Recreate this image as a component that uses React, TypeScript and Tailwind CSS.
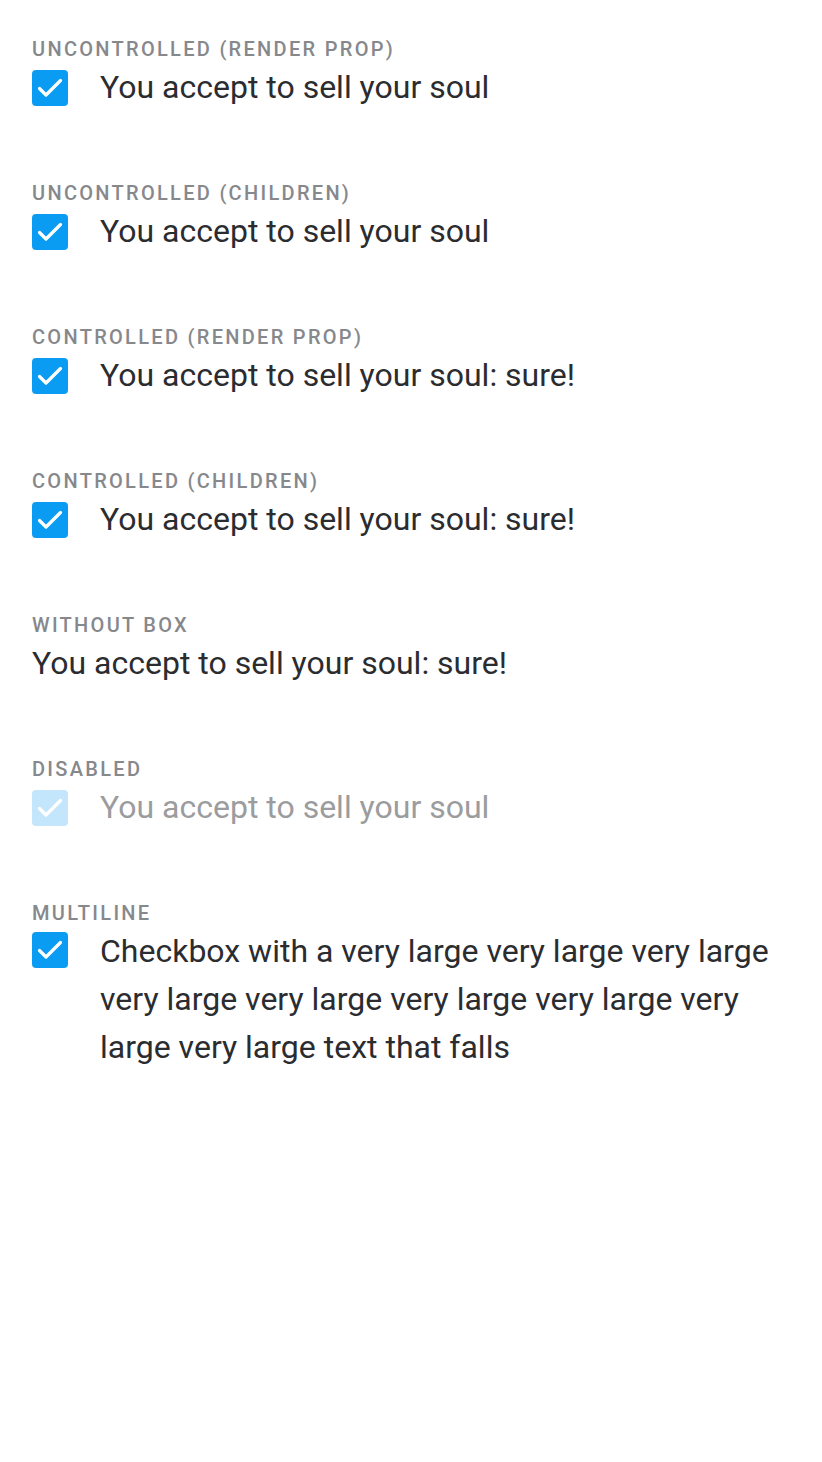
import React from 'react';

const font = { fontFamily: 'Roboto, "Noto Sans", sans-serif' };

const Box: React.FC<{ disabled?: boolean; className?: string }> = ({ disabled, className = '' }) => (
  <span
    className={`flex h-[36px] w-[36px] shrink-0 items-center justify-center rounded-[4px] ${
      disabled ? 'bg-[#c3e6fc]' : 'bg-[#0a9bf3]'
    } ${className}`}
  >
    <svg width="36" height="36" viewBox="0 0 36 36" fill="none">
      <path d="M7.5 18.5 L14 25 L28.5 10.5" stroke="white" strokeWidth="3.2" strokeLinecap="round" strokeLinejoin="round" />
    </svg>
  </span>
);

const Section: React.FC<{ title: string; children: React.ReactNode }> = ({ title, children }) => (
  <div>
    <div className="text-[20px] leading-[24px] font-medium uppercase tracking-[2.3px] text-[#86888c]">{title}</div>
    {children}
  </div>
);

const Row: React.FC<{ text: string; disabled?: boolean; noBox?: boolean }> = ({ text, disabled, noBox }) => (
  <label className="mt-[2px] flex items-center gap-[32px]">
    {!noBox && <Box disabled={disabled} className="mt-[2px]" />}
    <span className={`text-[32px] leading-[48px] ${disabled ? 'text-[#9b9c9e]' : 'text-[#2b2c30]'}`}>{text}</span>
  </label>
);

export default function App() {
  return (
    <div className="min-h-screen bg-white px-[32px] pt-[37px]" style={font}>
      <div className="flex flex-col gap-[70px]">
        <Section title="Uncontrolled (render prop)">
          <Row text="You accept to sell your soul" />
        </Section>
        <Section title="Uncontrolled (children)">
          <Row text="You accept to sell your soul" />
        </Section>
        <Section title="Controlled (render prop)">
          <Row text="You accept to sell your soul: sure!" />
        </Section>
        <Section title="Controlled (children)">
          <Row text="You accept to sell your soul: sure!" />
        </Section>
        <Section title="Without box">
          <Row text="You accept to sell your soul: sure!" noBox />
        </Section>
        <Section title="Disabled">
          <Row text="You accept to sell your soul" disabled />
        </Section>
        <Section title="Multiline">
          <label className="mt-[2px] flex items-start gap-[32px]">
            <Box className="mt-[5px]" />
            <span className="text-[32px] leading-[48px] text-[#2b2c30]">
              Checkbox with a very large very large very large very large very large very large very large very large very large text that falls
            </span>
          </label>
        </Section>
      </div>
    </div>
  );
}
